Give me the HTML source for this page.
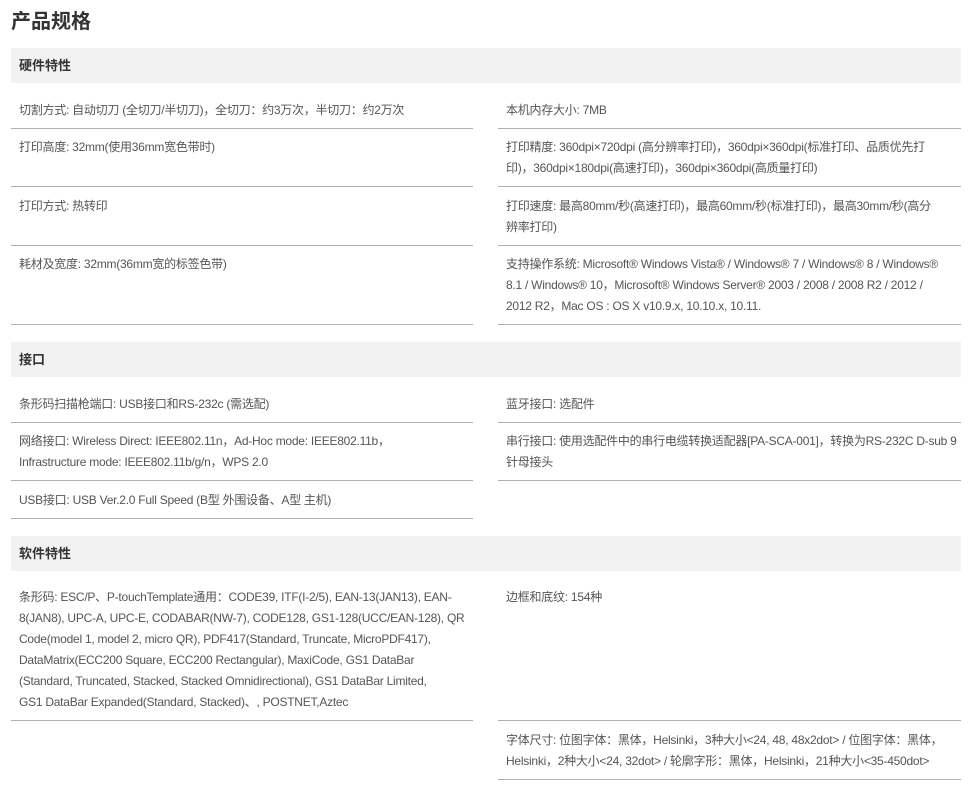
<!DOCTYPE html>
<html><head><meta charset="utf-8"><style>
body{margin:0;background:#fff;font-family:"Liberation Sans","Noto Sans CJK SC",sans-serif;color:#555;}
h1{position:absolute;left:11px;top:8px;margin:0;font-size:20px;color:#333;font-weight:bold;line-height:28px;}
.h{position:absolute;left:11px;width:950px;height:35px;background:#f2f2f2;font-size:13px;font-weight:bold;color:#333;line-height:35px;padding-left:8px;box-sizing:border-box;}
.t{position:absolute;font-size:12px;line-height:21px;white-space:nowrap;letter-spacing:-0.25px;}
.l{left:19px;}
.r{left:506px;}
.ln{position:absolute;height:1px;background:#b0b0b0;}
.ll{left:11px;width:462px;}
.rl{left:498px;width:463px;}
</style></head><body>
<h1>产品规格</h1>
<div class="h" style="top:48px">硬件特性</div>
<div class="t l" style="top:100px">切割方式: 自动切刀 (全切刀/半切刀)，全切刀：约3万次，半切刀：约2万次</div>
<div class="t r" style="top:100px">本机内存大小: 7MB</div>
<div class="ln ll" style="top:128px"></div><div class="ln rl" style="top:128px"></div>
<div class="t l" style="top:137px">打印高度: 32mm(使用36mm宽色带时)</div>
<div class="t r" style="top:137px">打印精度: 360dpi×720dpi (高分辨率打印)，360dpi×360dpi(标准打印、品质优先打<br>印)，360dpi×180dpi(高速打印)，360dpi×360dpi(高质量打印)</div>
<div class="ln ll" style="top:186px"></div><div class="ln rl" style="top:186px"></div>
<div class="t l" style="top:196px">打印方式: 热转印</div>
<div class="t r" style="top:196px">打印速度: 最高80mm/秒(高速打印)，最高60mm/秒(标准打印)，最高30mm/秒(高分<br>辨率打印)</div>
<div class="ln ll" style="top:245px"></div><div class="ln rl" style="top:245px"></div>
<div class="t l" style="top:254px">耗材及宽度: 32mm(36mm宽的标签色带)</div>
<div class="t r" style="top:254px">支持操作系统: Microsoft® Windows Vista® / Windows® 7 / Windows® 8 / Windows®<br>8.1 / Windows® 10，Microsoft® Windows Server® 2003 / 2008 / 2008 R2 / 2012 /<br>2012 R2，Mac OS : OS X v10.9.x, 10.10.x, 10.11.</div>
<div class="ln ll" style="top:324px"></div><div class="ln rl" style="top:324px"></div>

<div class="h" style="top:342px">接口</div>
<div class="t l" style="top:394px">条形码扫描枪端口: USB接口和RS-232c (需选配)</div>
<div class="t r" style="top:394px">蓝牙接口: 选配件</div>
<div class="ln ll" style="top:422px"></div><div class="ln rl" style="top:422px"></div>
<div class="t l" style="top:431px">网络接口: Wireless Direct: IEEE802.11n，Ad-Hoc mode: IEEE802.11b，<br>Infrastructure mode: IEEE802.11b/g/n，WPS 2.0</div>
<div class="t r" style="top:431px">串行接口: 使用选配件中的串行电缆转换适配器[PA-SCA-001]，转换为RS-232C D-sub 9<br>针母接头</div>
<div class="ln ll" style="top:480px"></div><div class="ln rl" style="top:480px"></div>
<div class="t l" style="top:490px">USB接口: USB Ver.2.0 Full Speed (B型 外围设备、A型 主机)</div>
<div class="ln ll" style="top:518px"></div>

<div class="h" style="top:536px">软件特性</div>
<div class="t l" style="top:587px">条形码: ESC/P、P-touchTemplate通用：CODE39, ITF(I-2/5), EAN-13(JAN13), EAN-<br>8(JAN8), UPC-A, UPC-E, CODABAR(NW-7), CODE128, GS1-128(UCC/EAN-128), QR<br>Code(model 1, model 2, micro QR), PDF417(Standard, Truncate, MicroPDF417),<br>DataMatrix(ECC200 Square, ECC200 Rectangular), MaxiCode, GS1 DataBar<br>(Standard, Truncated, Stacked, Stacked Omnidirectional), GS1 DataBar Limited,<br>GS1 DataBar Expanded(Standard, Stacked)、, POSTNET,Aztec</div>
<div class="t r" style="top:587px">边框和底纹: 154种</div>
<div class="ln ll" style="top:720px"></div><div class="ln rl" style="top:720px"></div>
<div class="t r" style="top:730px">字体尺寸: 位图字体：黑体，Helsinki，3种大小&lt;24, 48, 48x2dot&gt; / 位图字体：黑体，<br>Helsinki，2种大小&lt;24, 32dot&gt; / 轮廓字形：黑体，Helsinki，21种大小&lt;35-450dot&gt;</div>
<div class="ln rl" style="top:779px"></div>
</body></html>
